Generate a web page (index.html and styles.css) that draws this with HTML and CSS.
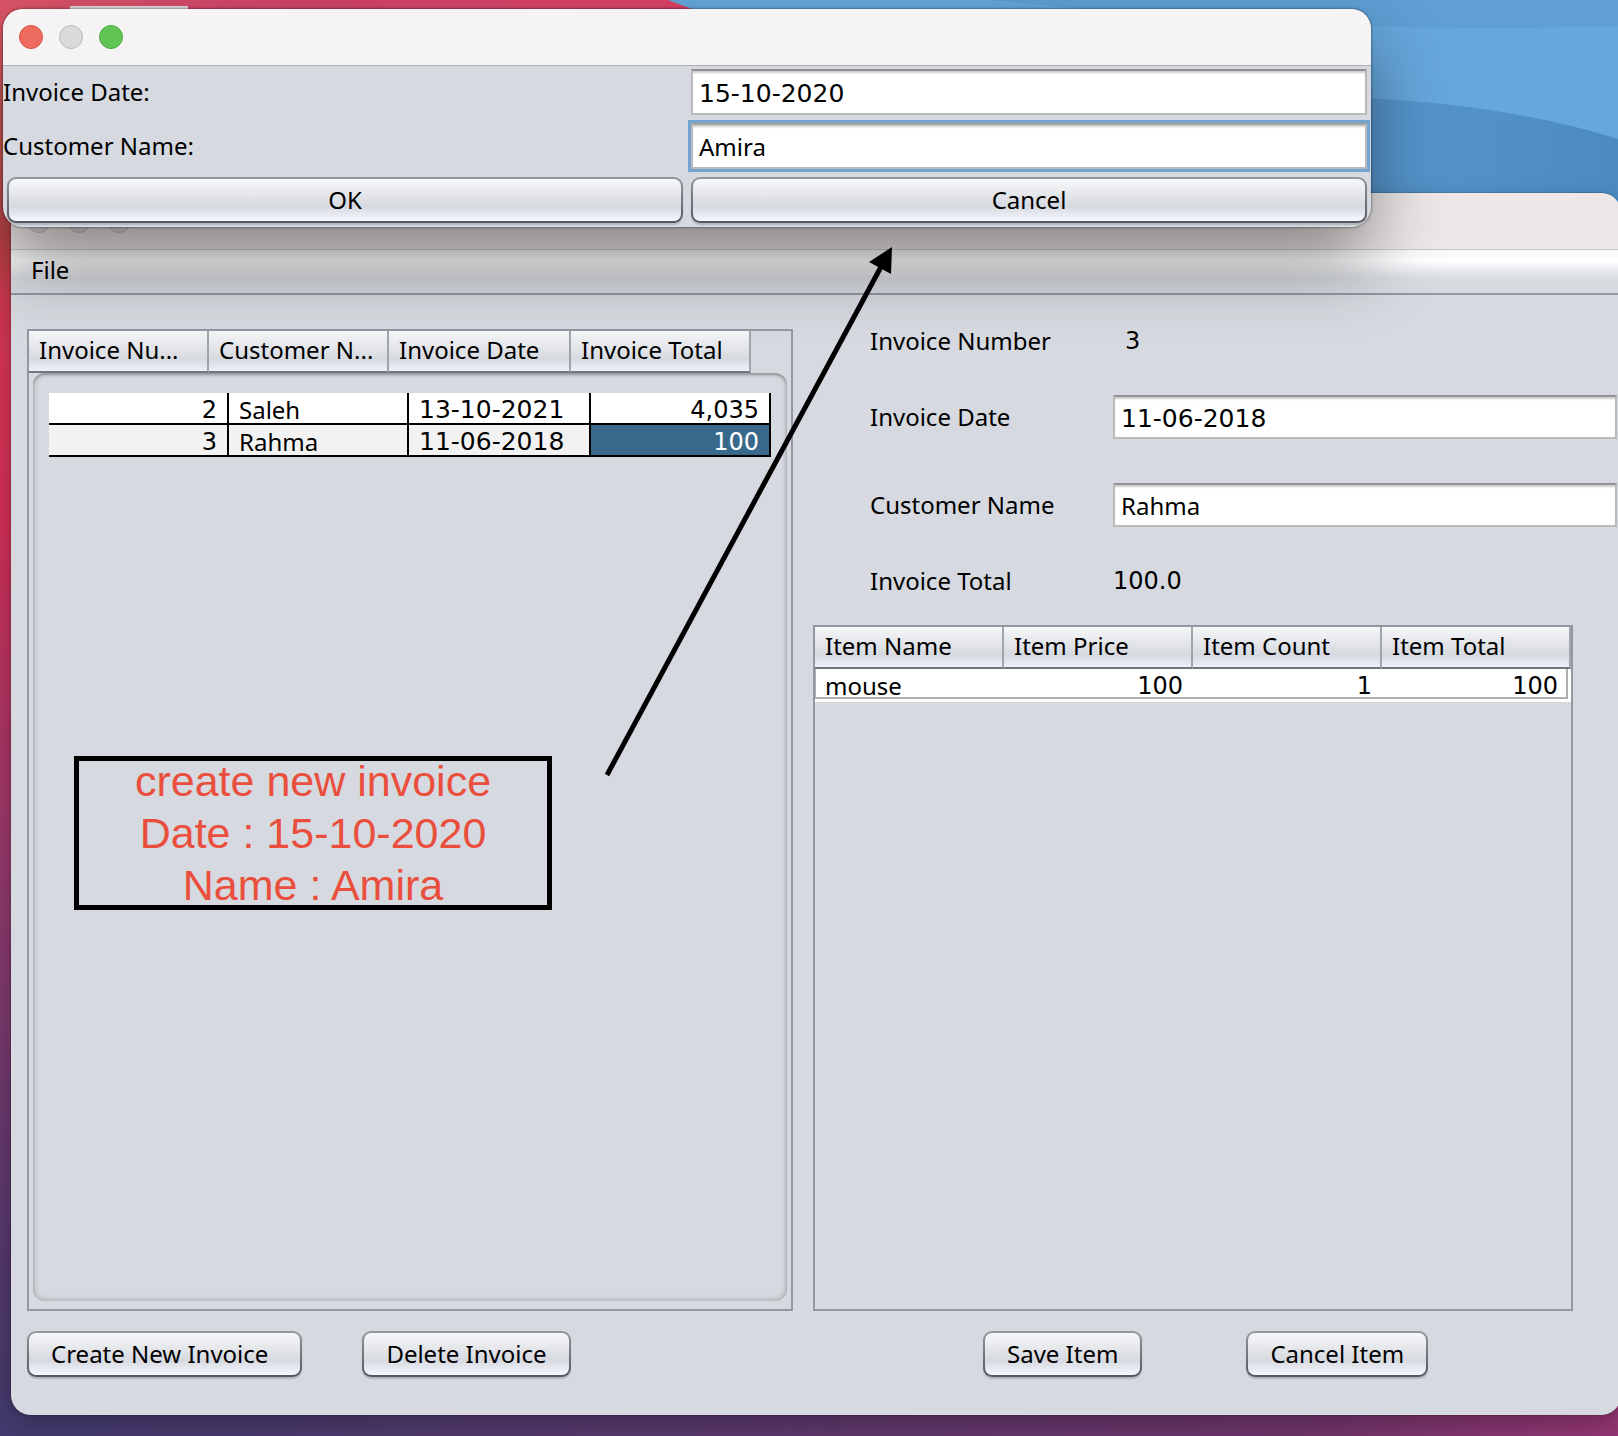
FILE: index.html
```html
<!DOCTYPE html>
<html lang="en">
<head>
<meta charset="utf-8">
<meta name="viewport" content="width=device-width, initial-scale=1">
<title>Invoices</title>
<link rel="stylesheet" href="styles.css">
</head>
<body>
<div class="desktop">
  <svg class="wallpaper" viewBox="0 0 1618 1436" preserveAspectRatio="none" aria-hidden="true">
    <defs>
      <linearGradient id="warm" x1="0" y1="0" x2="0" y2="1">
        <stop offset="0" stop-color="#d95466"/>
        <stop offset="0.1" stop-color="#cf5a52"/>
        <stop offset="0.16" stop-color="#c84a4c"/>
        <stop offset="0.22" stop-color="#d43753"/>
        <stop offset="0.36" stop-color="#d22f56"/>
        <stop offset="0.6" stop-color="#93396b"/>
        <stop offset="0.85" stop-color="#57386c"/>
        <stop offset="1" stop-color="#423a6c"/>
      </linearGradient>
      <linearGradient id="top" x1="0" y1="0" x2="1" y2="0">
        <stop offset="0" stop-color="#da5566"/>
        <stop offset="0.4" stop-color="#d1456c"/>
        <stop offset="1" stop-color="#dc4264"/>
      </linearGradient>
      <linearGradient id="dusk" x1="0" y1="0" x2="1" y2="0">
        <stop offset="0" stop-color="#433b6e"/>
        <stop offset="0.2" stop-color="#4b3a6c"/>
        <stop offset="0.5" stop-color="#5c376a"/>
        <stop offset="0.8" stop-color="#6d3469"/>
        <stop offset="1" stop-color="#943672"/>
      </linearGradient>
      <linearGradient id="wave" x1="0" y1="0" x2="1" y2="0">
        <stop offset="0" stop-color="#5898cf"/>
        <stop offset="1" stop-color="#4c8bc2"/>
      </linearGradient>
    </defs>
    <rect width="1618" height="1436" fill="url(#warm)"/>
    <rect width="720" height="12" fill="url(#top)"/>
    <path d="M668 0 H1618 V260 H1340 L700 12 Z" fill="#66a7dc"/>
    <path d="M990 0 H1618 V26 Q1400 32 1200 18 Q1090 10 990 0Z" fill="#5f9fd4"/>
    <path d="M1340 97 Q1500 102 1618 139 V260 H1340Z" fill="url(#wave)"/>
    <rect y="1400" width="1618" height="36" fill="url(#dusk)"/>
    <rect x="70" y="6" width="118" height="12" fill="#e3dfe3"/>
  </svg>

  <main class="window app-window">
    <header class="titlebar">
      <span class="light"></span><span class="light"></span><span class="light"></span>
    </header>
    <nav class="menubar"><button type="button" class="menu">File</button></nav>

    <div class="content">
      <section class="column invoices">
        <div class="frame">
          <table class="grid-head invoice-cols">
            <colgroup><col><col><col><col></colgroup>
            <thead>
              <tr><th>Invoice Nu...</th><th>Customer N...</th><th>Invoice Date</th><th>Invoice Total</th></tr>
            </thead>
          </table>
          <div class="inset">
            <table class="invoice-table invoice-cols">
              <colgroup><col><col><col><col></colgroup>
              <tbody>
                <tr><td class="num">2</td><td>Saleh</td><td class="date">13-10-2021</td><td class="num">4,035</td></tr>
                <tr><td class="num">3</td><td>Rahma</td><td class="date">11-06-2018</td><td class="num selected">100</td></tr>
              </tbody>
            </table>
          </div>
        </div>
        <div class="actions">
          <button type="button" class="btn create">Create New Invoice</button>
          <button type="button" class="btn">Delete Invoice</button>
        </div>
      </section>

      <section class="column details">
        <form class="form">
          <div class="form-row">
            <span class="label">Invoice Number</span>
            <output class="digits value-number">3</output>
          </div>
          <div class="form-row">
            <label class="label" for="date">Invoice Date</label>
            <input class="field date" id="date" type="text" value="11-06-2018">
          </div>
          <div class="form-row spaced">
            <label class="label" for="customer">Customer Name</label>
            <input class="field" id="customer" type="text" value="Rahma">
          </div>
          <div class="form-row">
            <span class="label">Invoice Total</span>
            <output class="digits">100.0</output>
          </div>
        </form>
        <div class="frame">
          <table class="grid-head item-table">
            <colgroup><col><col><col><col></colgroup>
            <thead>
              <tr><th>Item Name</th><th>Item Price</th><th>Item Count</th><th>Item Total</th></tr>
            </thead>
            <tbody>
              <tr><td>mouse</td><td class="num">100</td><td class="num">1</td><td class="num">100</td></tr>
            </tbody>
          </table>
        </div>
        <div class="actions">
          <button type="button" class="btn">Save Item</button>
          <button type="button" class="btn">Cancel Item</button>
        </div>
      </section>
    </div>
  </main>

  <div class="window dialog" role="dialog" aria-label="New invoice">
    <header class="titlebar">
      <span class="light close"></span><span class="light"></span><span class="light expand"></span>
    </header>
    <form class="dialog-grid">
      <label for="new-date">Invoice Date:</label>
      <input class="field date" id="new-date" type="text" value="15-10-2020">
      <label for="new-name">Customer Name:</label>
      <input class="field focused" id="new-name" type="text" value="Amira">
      <button type="button" class="btn">OK</button>
      <button type="button" class="btn">Cancel</button>
    </form>
  </div>

  <div class="note"><p>create new invoice<br>Date : 15-10-2020<br>Name : Amira</p></div>
  <svg class="arrow" viewBox="0 0 292 534" aria-hidden="true">
    <path d="M5 530 L280 20" stroke="#000" stroke-width="5" fill="none"/>
    <path d="M290 2 L267 17 L289 29 Z" fill="#000"/>
  </svg>
</div>
</body>
</html>
```

FILE: styles.css
```css
* { box-sizing: border-box; }

body {
  margin: 0;
  color: #000;
  font: 24px/30px "Noto Sans", sans-serif;
}

button, input {
  font: inherit;
  color: inherit;
  margin: 0;
}

.desktop {
  position: relative;
  display: flex;
  flex-direction: column;
  min-height: 100vh;
  padding: 193px 0 21px 11px;
  overflow: hidden;
}

.wallpaper {
  position: absolute;
  inset: 0;
  width: 100%;
  height: 100%;
}

/* Windows */
.window {
  position: relative;
  background: #d6d9df;
  border-radius: 20px;
  overflow: hidden;
}

.app-window {
  flex: 1;
  display: flex;
  flex-direction: column;
  margin-right: -3px;
  box-shadow: 0 0 2px rgba(0, 0, 0, 0.5), 0 8px 24px rgba(0, 0, 0, 0.25);
}

.titlebar {
  display: flex;
  align-items: center;
  gap: 16px;
  height: 57px;
  padding: 0 16px;
  background: #ede7e8;
  border-bottom: 1px solid #c9c9cb;
}

.light {
  width: 24px;
  height: 24px;
  border: 1px solid #bbb7b9;
  border-radius: 50%;
  background: #dcd9da;
}

.light.close { background: #ed6b5f; border-color: #d65247; }
.light.expand { background: #61c555; border-color: #4bab3f; }

.menubar {
  display: flex;
  align-items: center;
  height: 45px;
  padding: 0 20px 4px;
  background: linear-gradient(#f4f8f6, #fff 25%, #d9dce1 65%, #d6d9df);
  border-bottom: 2px solid #9297a3;
}

.menu {
  padding: 0;
  border: 0;
  background: none;
}

.content {
  flex: 1;
  display: grid;
  grid-template-columns: 766fr 805fr;
  gap: 20px;
  padding: 24px 3px 38px 16px;
}

.column {
  display: flex;
  flex-direction: column;
  min-width: 0;
}

.invoices { padding-top: 10px; }

.frame {
  flex: 1;
  display: flex;
  flex-direction: column;
  border: 2px solid #9297a1;
}

.details .frame { margin: 22px 45px 0 0; }

/* Tables */
table {
  border-collapse: separate;
  border-spacing: 0;
  table-layout: fixed;
}

.invoice-cols { width: 722px; }
.invoice-cols col { width: 180px; }
.invoice-cols col:nth-child(3) { width: 182px; }

th {
  height: 42px;
  padding: 0 0 2px 10px;
  overflow: hidden;
  font-weight: 400;
  text-align: left;
  white-space: nowrap;
  background: linear-gradient(#f6f7f9, #d6d9df 70%, #eef1fa);
  border-right: 2px solid #a0a4ab;
  border-bottom: 2px solid #71767e;
}

td {
  height: 32px;
  padding: 4px 10px 0;
  line-height: 26px;
  white-space: nowrap;
  background: #fff;
}

.num, .date, .digits { font-family: "DejaVu Sans", sans-serif; }
.num { text-align: right; }
.date { font-size: 25px; }

.inset {
  flex: 1;
  margin: 0 4px 8px;
  padding: 20px 0 0 16px;
  border-radius: 12px;
  box-shadow: inset 0 2px 2px #989b9f, inset 0 0 5px 1px #a5a8ac;
}

.invoice-table td {
  border-right: 2px solid #000;
  border-bottom: 2px solid #000;
}

.invoice-table tr:nth-child(2) td { background: #f2f2f2; }

.invoice-table tr td.selected {
  color: #fff;
  background: #39698a;
}

.item-table { width: 100%; }

.item-table td {
  border-bottom: 3px solid #fff;
  box-shadow: inset 0 -2px #afafaf;
}

.item-table td:first-child { box-shadow: inset 1px 0 #afafaf, inset 0 -2px #afafaf; }
.item-table td:last-child {
  border-right: 3px solid #fff;
  box-shadow: inset -2px -2px #afafaf;
}

/* Form */
.form {
  display: flex;
  flex-direction: column;
  gap: 32px;
}

.form-row {
  display: grid;
  grid-template-columns: 243px 1fr;
  align-items: center;
  height: 44px;
  padding: 0 1px 0 57px;
}

.form-row.spaced { margin-top: 12px; }
.value-number { padding-left: 12px; }

.field {
  width: 100%;
  min-width: 0;
  height: 44px;
  padding: 0 6px;
  border: 2px solid #b9bab9;
  border-top-color: #8f9090;
  border-radius: 0;
  outline: 0;
  background: #fff;
  box-shadow: inset 0 3px 2px -1px #ccc;
}

.field.date { padding-top: 2px; }

.field.focused {
  border-top-color: #a5a29e;
  box-shadow: inset 0 3px 2px -1px #ccc, 0 0 0 3px #73a4d1;
}

/* Buttons */
.btn {
  height: 46px;
  padding: 0 22px;
  border: 2px solid transparent;
  border-radius: 9px;
  background:
    linear-gradient(#f7f8fa, #d6d9df 65%, #f4f7ff) padding-box,
    linear-gradient(#959a9f, #53565d) border-box;
  box-shadow: 0 2px 1px #b4b7bd;
}

.btn.create { padding-right: 32px; }

.actions {
  display: flex;
  gap: 60px;
  margin-top: 20px;
}

.details .actions {
  gap: 104px;
  padding-left: 170px;
}

/* New invoice dialog */
.dialog {
  position: absolute;
  top: 9px;
  left: 3px;
  width: calc(100% - 250px);
  box-shadow: 0 0 2px 1px rgba(0, 0, 0, 0.3), 0 36px 72px rgba(0, 0, 0, 0.42);
}

.dialog .titlebar {
  background: #f6f3f4;
  border-bottom-color: #adafb5;
}

.dialog-grid {
  display: grid;
  grid-template-columns: 1fr 1fr;
  gap: 8px;
  align-items: center;
  padding: 3px 4px 4px;
}

.dialog-grid label { margin-left: -4px; }
.dialog-grid .field { height: 46px; }

/* Callout */
.note {
  position: absolute;
  top: 756px;
  left: 74px;
  display: flex;
  align-items: end;
  justify-content: center;
  width: 478px;
  height: 154px;
  padding-bottom: 2px;
  border: 5px solid #000;
  color: #ea4f3d;
  font: 43px/48px "Liberation Sans", sans-serif;
  text-align: center;
}

.note p {
  margin: 0 0 -8px;
  line-height: 52px;
}

.arrow {
  position: absolute;
  top: 245px;
  left: 602px;
  width: 292px;
  height: 534px;
}
```
